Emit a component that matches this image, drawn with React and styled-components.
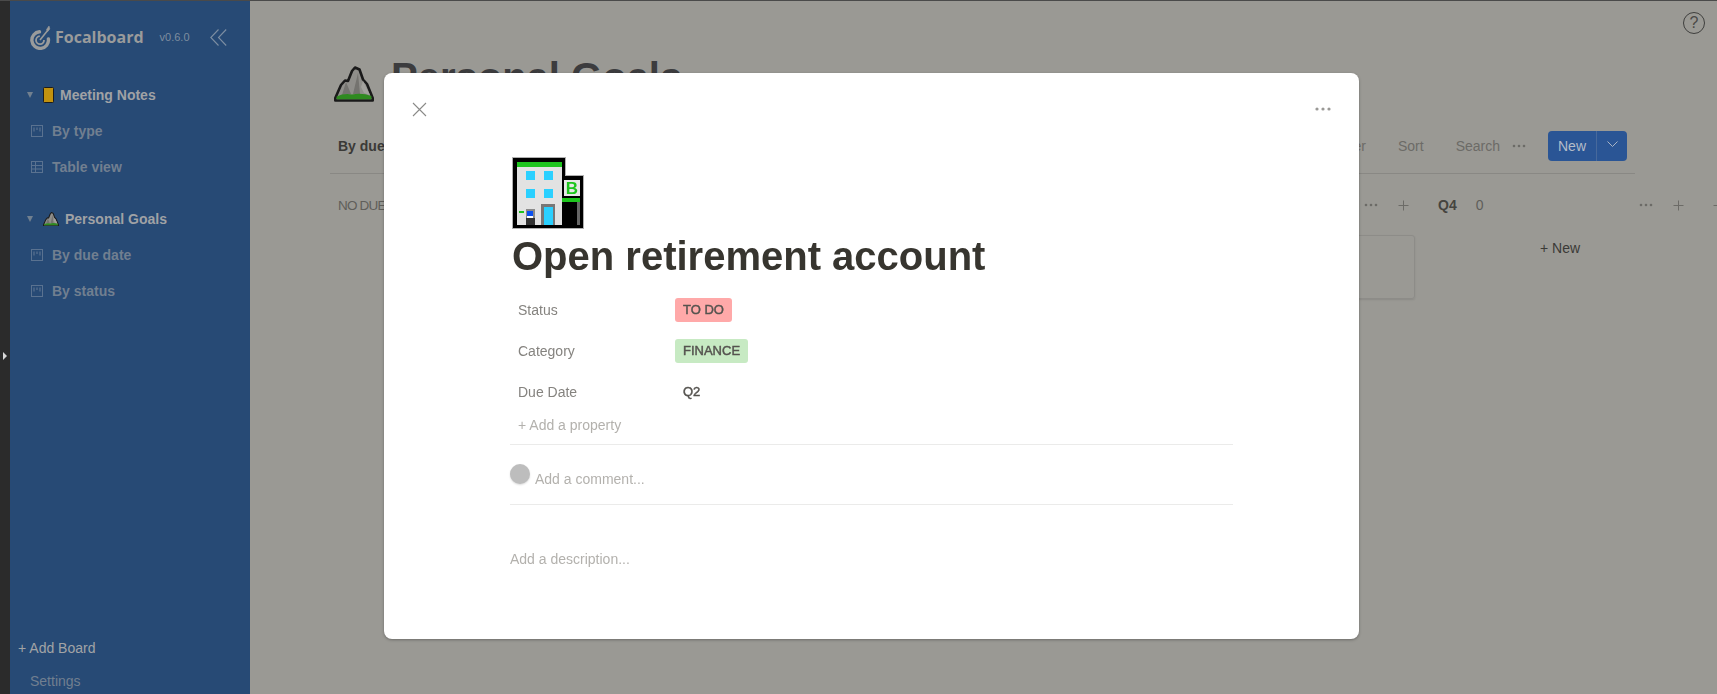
import React from 'react';
import styled, { createGlobalStyle } from 'styled-components';

const GlobalStyle = createGlobalStyle`
  html, body { margin: 0; padding: 0; height: 100%; overflow: hidden; }
  body { font-family: "Liberation Sans", Arial, sans-serif; font-size: 14px; }
`;

const Page = styled.div`
  display: flex;
  height: 693px;
  border-top: 1px solid #4a4a4a;
  background: #9a9994;
  overflow: hidden;
`;

const Strip = styled.div`
  flex: 0 0 10px;
  display: flex;
  align-items: center;
  background: #2b2b2b;
`;

const StripArrow = styled.span`
  width: 0;
  height: 0;
  margin: 16px 0 0 3px;
  border-left: 4px solid #d8d8d8;
  border-top: 4px solid transparent;
  border-bottom: 4px solid transparent;
`;

const Sidebar = styled.aside`
  flex: 0 0 240px;
  display: flex;
  flex-direction: column;
  background: #274a75;
`;

const SideHeader = styled.div`
  display: flex;
  align-items: center;
  height: 76px;
  box-sizing: border-box;
  padding: 0 0 4px 20px;
`;

const Brand = styled.span`
  font-family: "Open Sans", sans-serif;
  font-weight: 700;
  font-size: 16px;
  color: #9a9b9b;
  margin-left: 4px;
`;

const Version = styled.span`
  font-size: 11px;
  color: #7e8d9f;
  margin-left: 16px;
`;

const Collapse = styled.svg`
  margin-left: 20px;
`;

const TreeGroup = styled.div`
  margin-bottom: 16px;
`;

const TreeRow = styled.div`
  display: flex;
  align-items: center;
  height: 36px;
  padding-left: ${p => (p.$board ? 17 : 21)}px;
  font-weight: 700;
  color: ${p => (p.$board ? '#a0a2a5' : '#717f90')};
`;

const Twist = styled.span`
  width: 0;
  height: 0;
  margin-right: 10px;
  border-top: 6px solid #71808f;
  border-left: 3.5px solid transparent;
  border-right: 3.5px solid transparent;
`;

const RowIcon = styled.svg`
  flex: none;
  margin-right: ${p => p.$gap}px;
`;

const SideFooter = styled.div`
  margin-top: auto;
`;

const AddBoard = styled.div`
  height: 33px;
  line-height: 35px;
  padding-left: 8px;
  color: #a2a4a6;
`;

const Settings = styled.div`
  height: 30px;
  line-height: 34px;
  padding-left: 20px;
  color: #717f90;
`;

const Main = styled.main`
  flex: 1;
  min-width: 0;
  padding: 62px 82px 0 80px;
  overflow: hidden;
  color: #3b3a37;
`;

const TitleRow = styled.div`
  display: flex;
  align-items: center;
  gap: 17px;
  padding-left: 4px;
  height: 42px;
`;

const BoardTitle = styled.h1`
  margin: -14px 0 0;
  font-size: 40px;
  line-height: 46px;
  font-weight: 700;
  color: #3c3c3e;
`;

const Toolbar = styled.div`
  display: flex;
  align-items: center;
  height: 30px;
  margin-top: 26px;
  padding: 0 8px;
  color: #6c6b67;
`;

const ViewName = styled.span`
  font-weight: 700;
  color: #3b3a37;
`;

const ToolSpacer = styled.div`
  flex: 1;
`;

const ToolText = styled.span`
  margin-left: 32px;
`;

const ToolDots = styled.span`
  margin-left: 12px;
`;

const Dots = styled.svg`
  display: block;
  flex: none;
`;

const NewButton = styled.div`
  display: flex;
  align-items: center;
  height: 30px;
  width: 79px;
  margin-left: 22px;
  border-radius: 4px;
  background: #2a5595;
  color: #b4bcc8;
`;

const NewLabel = styled.span`
  width: 48px;
  text-align: center;
  line-height: 30px;
  border-right: 1px solid #47699c;
`;

const NewCaret = styled.svg`
  margin: 0 0 4px 10px;
`;

const Rule = styled.div`
  height: 1px;
  margin-top: 12px;
  background: #898884;
`;

const Columns = styled.div`
  display: flex;
  margin-top: 19px;
`;

const Column = styled.section`
  flex: 0 0 260px;
  margin-right: 15px;
`;

const ColumnHead = styled.div`
  display: flex;
  align-items: center;
  height: 24px;
  padding-left: 8px;
  color: #5f5e5a;
`;

const ColumnName = styled.span`
  font-size: ${p => (p.$dim ? 13.5 : 14)}px;
  letter-spacing: ${p => (p.$dim ? '-0.8px' : '0')};
  font-weight: ${p => (p.$dim ? 400 : 700)};
  color: ${p => (p.$dim ? '#5f5e5a' : '#45443f')};
`;

const Count = styled.span`
  margin-left: 19px;
  color: #5f5e5a;
`;

const HeadActions = styled.div`
  display: flex;
  align-items: center;
  gap: 4px;
  margin-left: auto;
`;

const HeadButton = styled.span`
  display: flex;
  justify-content: center;
  align-items: center;
  width: ${p => p.$w}px;
  height: 24px;
`;

const Card = styled.div`
  height: 62px;
  margin-top: 18px;
  border: 1px solid #8d8c88;
  border-radius: 3px;
  box-shadow: 0 1px 2px rgba(0, 0, 0, 0.1);
`;

const AddCard = styled.div`
  margin-top: 23px;
  text-align: center;
  color: #3b3a37;
`;

const HelpBadge = styled.div`
  position: absolute;
  top: 12px;
  right: 12px;
  width: 20px;
  height: 20px;
  border: 1px solid #3f3f3d;
  border-radius: 50%;
  text-align: center;
  font-size: 16px;
  line-height: 20px;
  color: #4b4a47;
`;

const Overlay = styled.div`
  position: fixed;
  inset: 0;
  display: flex;
  align-items: flex-start;
  padding: 73px 0 0 384px;
`;

const Dialog = styled.div`
  width: 975px;
  height: 566px;
  border-radius: 8px;
  background: #fff;
  box-shadow: 0 1px 3px rgba(0, 0, 0, 0.3);
  color: #37352f;
`;

const DialogBar = styled.div`
  display: flex;
  justify-content: space-between;
  align-items: center;
  height: 72px;
  padding: 0 28px;
`;

const DialogBody = styled.div`
  padding: 12px 126px 0;
`;

const BigIcon = styled.svg`
  display: block;
  margin-left: 2px;
`;

const CardTitle = styled.h2`
  margin: 4px 0 0 2px;
  font-size: 40px;
  line-height: 46px;
  font-weight: 700;
  color: #37352f;
`;

const PropRow = styled.div`
  display: flex;
  align-items: center;
  height: 41px;
  padding-left: 8px;
`;

const Properties = styled.div`
  margin-top: 10px;
`;

const PropName = styled.span`
  flex: 0 0 157px;
  color: #85837f;
`;

const Tag = styled.span`
  height: 24px;
  margin-top: 1px;
  line-height: 24px;
  padding: 0 8px;
  border-radius: 3px;
  font-size: 13px;
  -webkit-text-stroke: 0.45px #55534f;
  color: #55534f;
  background: ${p => p.$bg};
`;

const PlainValue = styled(Tag)`
  background: none;
`;

const AddProperty = styled.div`
  height: 26px;
  line-height: 26px;
  padding-left: 8px;
  color: #b3b1ad;
`;

const Divider = styled.div`
  height: 1px;
  margin-top: ${p => p.$top || 0}px;
  background: #ebebea;
`;

const CommentRow = styled.div`
  display: flex;
  align-items: flex-end;
  height: 59px;
  padding-bottom: 17px;
  box-sizing: border-box;
  color: #b3b1ad;
`;

const Avatar = styled.span`
  flex: none;
  position: relative;
  top: -3px;
  width: 20px;
  height: 20px;
  margin-right: 5px;
  border-radius: 50%;
  background: #bdbdbd;
  box-shadow: 0 1px 2px rgba(0, 0, 0, 0.15);
`;

const Description = styled.div`
  margin-top: 46px;
  color: #b3b1ad;
`;

const MountainSvg = styled.svg`
  display: block;
  flex: none;
  margin-right: ${p => p.$gap || 0}px;
`;

const BoardIcon = () => (
  <RowIcon $gap={9} width="12" height="12" viewBox="0 0 12 12" fill="none" stroke="#5a7290">
    <rect x="0.5" y="0.5" width="11" height="11" />
    <path d="M3 2.5v4M6 2.5v2.5M9 2.5v4" strokeWidth="1.2" />
  </RowIcon>
);

const TableIcon = () => (
  <RowIcon $gap={9} width="12" height="12" viewBox="0 0 12 12" fill="none" stroke="#5a7290">
    <rect x="0.5" y="0.5" width="11" height="11" />
    <path d="M0.5 4.5h11M0.5 8h11M4.5 0.5v11" />
  </RowIcon>
);

const NotebookIcon = () => (
  <RowIcon $gap={6} width="11" height="16" viewBox="0 0 11 16">
    <rect x="0.5" y="0.5" width="10" height="15" rx="1" fill="#c2920f" stroke="#1c1c1c" />
  </RowIcon>
);

const MountainIcon = ({ size, gap }) => (
  <MountainSvg $gap={gap} width={size} height={size * 0.9} viewBox="0 0 40 36">
    <path d="M1.3 34.5 L1.3 32 L7 19 L11 14.5 L14 15 L18 5 L21 1.5 L25.5 3.5 L29 13.5 L33 18 L38.7 32 L38.7 34.5 Z" fill="#8f8e8a" stroke="#1a1a1a" strokeWidth="2.6" strokeLinejoin="round" />
    <path d="M12 16 L8 29 L17 28 Z M24 7 L19 28 L26 28 Z" fill="#74736f" />
    <path d="M29 15 L27 21 L30 27 L36 29 Z" fill="#a3a29e" />
    <path d="M2.6 33.2 L2.6 30.5 Q10 27 18 28.5 Q28 26.5 37.4 30 L37.4 33.2 Z" fill="#2f8a20" />
  </MountainSvg>
);

const LogoIcon = () => (
  <svg width="21" height="25" viewBox="0 0 21 25" fill="none" stroke="#9a9b9b">
    <path d="M9.5 6.8 A8.3 8.3 0 1 0 18.4 14" strokeWidth="3.4" strokeLinecap="round" />
    <path d="M9.8 11.2 A4 4 0 1 0 14 15" strokeWidth="1.8" />
    <path d="M10 15 L18 5" strokeWidth="1.6" />
    <path d="M16.5 4.5 L19 1 L19.8 4 L17.6 6.6 Z" fill="#9a9b9b" strokeWidth="0.6" />
  </svg>
);

const DotsIcon = ({ color = '#6c6b67', wide }) => (
  <Dots width={wide ? 16 : 14} height="4" viewBox={wide ? '0 0 16 4' : '0 0 14 4'} fill={color}>
    <circle cx="2" cy="2" r={wide ? 1.6 : 1.3} />
    <circle cx={wide ? 8 : 7} cy="2" r={wide ? 1.6 : 1.3} />
    <circle cx={wide ? 14 : 12} cy="2" r={wide ? 1.6 : 1.3} />
  </Dots>
);

const PlusIcon = () => (
  <Dots width="11" height="11" viewBox="0 0 11 11" stroke="#6c6b67">
    <path d="M5.5 0.5v10M0.5 5.5h10" />
  </Dots>
);

// the bank building emoji, square by square
const BuildingIcon = () => (
  <BigIcon width="72" height="72" viewBox="0 0 72 72" shapeRendering="crispEdges">
    <path d="M0 0h54v18h18v54H0z" fill="#000" />
    <path d="M0.5 .5h53v18h18v53H.5z" fill="none" stroke="#b0b0b0" />
    <rect x="5" y="5" width="45" height="63" fill="#e2e2e2" />
    <rect x="5" y="5" width="45" height="5" fill="#1ec51e" />
    <rect x="14" y="14" width="9" height="9" fill="#2ad0ff" />
    <rect x="32" y="14" width="9" height="9" fill="#2ad0ff" />
    <rect x="14" y="32" width="9" height="9" fill="#2ad0ff" />
    <rect x="32" y="32" width="9" height="9" fill="#2ad0ff" />
    <rect x="29" y="47" width="14" height="21" fill="#777" />
    <rect x="32" y="50" width="9" height="18" fill="#2ad0ff" />
    <rect x="14" y="52" width="9" height="16" fill="#8a8a8a" />
    <rect x="15" y="54" width="6" height="5" fill="#0a50f0" />
    <rect x="15" y="59" width="6" height="2" fill="#fff" />
    <rect x="14" y="61" width="9" height="7" fill="#333" />
    <rect x="7" y="54" width="5" height="2" fill="#1ec51e" />
    <rect x="52" y="23" width="16" height="16" fill="#e8e8e8" />
    <text x="60" y="37" textAnchor="middle" fontFamily="Liberation Sans, sans-serif" fontWeight="700" fontSize="17" fill="#1ec51e">B</text>
    <rect x="50" y="41" width="18" height="4" fill="#1ec51e" />
    <rect x="65" y="45" width="3" height="23" fill="#666" />
  </BigIcon>
);

const columnNames = ['NO DUE DATE', 'Q1', 'Q2', 'Q3', 'Q4'];

export default function App() {
  return (
    <>
      <GlobalStyle />
      <Page>
        <Strip>
          <StripArrow />
        </Strip>
        <Sidebar>
          <SideHeader>
            <LogoIcon />
            <Brand>Focalboard</Brand>
            <Version>v0.6.0</Version>
            <Collapse width="17" height="17" viewBox="0 0 17 17" fill="none" stroke="#7d8ea2" strokeWidth="1.1">
              <path d="M8.5 0.5 L0.8 8.5 L8.5 16.5M16.2 0.5 L8.5 8.5 L16.2 16.5" />
            </Collapse>
          </SideHeader>
          <TreeGroup>
            <TreeRow $board>
              <Twist />
              <NotebookIcon />
              Meeting Notes
            </TreeRow>
            <TreeRow><BoardIcon />By type</TreeRow>
            <TreeRow><TableIcon />Table view</TreeRow>
          </TreeGroup>
          <TreeGroup>
            <TreeRow $board>
              <Twist />
              <MountainIcon size={16} gap={6} />
              Personal Goals
            </TreeRow>
            <TreeRow><BoardIcon />By due date</TreeRow>
            <TreeRow><BoardIcon />By status</TreeRow>
          </TreeGroup>
          <SideFooter>
            <AddBoard>+ Add Board</AddBoard>
            <Settings>Settings</Settings>
          </SideFooter>
        </Sidebar>
        <Main>
          <TitleRow>
            <MountainIcon size={40} />
            <BoardTitle>Personal Goals</BoardTitle>
          </TitleRow>
          <Toolbar>
            <ViewName>By due date</ViewName>
            <ToolSpacer />
            <ToolText>Filter</ToolText>
            <ToolText>Sort</ToolText>
            <ToolText>Search</ToolText>
            <ToolDots><DotsIcon /></ToolDots>
            <NewButton>
              <NewLabel>New</NewLabel>
              <NewCaret width="11" height="6" viewBox="0 0 11 6" fill="none" stroke="#a9b4c5">
                <path d="M0.5 0.5 L5.5 5.5 L10.5 0.5" />
              </NewCaret>
            </NewButton>
          </Toolbar>
          <Rule />
          <Columns>
            {columnNames.map((name, i) => (
              <Column key={name}>
                <ColumnHead>
                  <ColumnName $dim={i === 0}>{name}</ColumnName>
                  <Count>0</Count>
                  <HeadActions>
                    <HeadButton $w={32}><DotsIcon /></HeadButton>
                    <HeadButton $w={24}><PlusIcon /></HeadButton>
                  </HeadActions>
                </ColumnHead>
                {i === 3 ? <Card /> : <AddCard>+ New</AddCard>}
              </Column>
            ))}
            <ColumnHead><PlusIcon /></ColumnHead>
          </Columns>
        </Main>
        <HelpBadge>?</HelpBadge>
      </Page>
      <Overlay>
        <Dialog>
          <DialogBar>
            <svg width="15" height="15" viewBox="0 0 15 15" stroke="#8a8a88" strokeWidth="1.1">
              <path d="M1 1 L14 14M14 1 L1 14" />
            </svg>
            <DotsIcon color="#9a9996" wide />
          </DialogBar>
          <DialogBody>
            <BuildingIcon />
            <CardTitle>Open retirement account</CardTitle>
            <Properties>
              <PropRow>
                <PropName>Status</PropName>
                <Tag $bg="#ffa9a9">TO DO</Tag>
              </PropRow>
              <PropRow>
                <PropName>Category</PropName>
                <Tag $bg="#c7eac3">FINANCE</Tag>
              </PropRow>
              <PropRow>
                <PropName>Due Date</PropName>
                <PlainValue>Q2</PlainValue>
              </PropRow>
            </Properties>
            <AddProperty>+ Add a property</AddProperty>
            <Divider $top={6} />
            <CommentRow>
              <Avatar />
              Add a comment...
            </CommentRow>
            <Divider />
            <Description>Add a description...</Description>
          </DialogBody>
        </Dialog>
      </Overlay>
    </>
  );
}
